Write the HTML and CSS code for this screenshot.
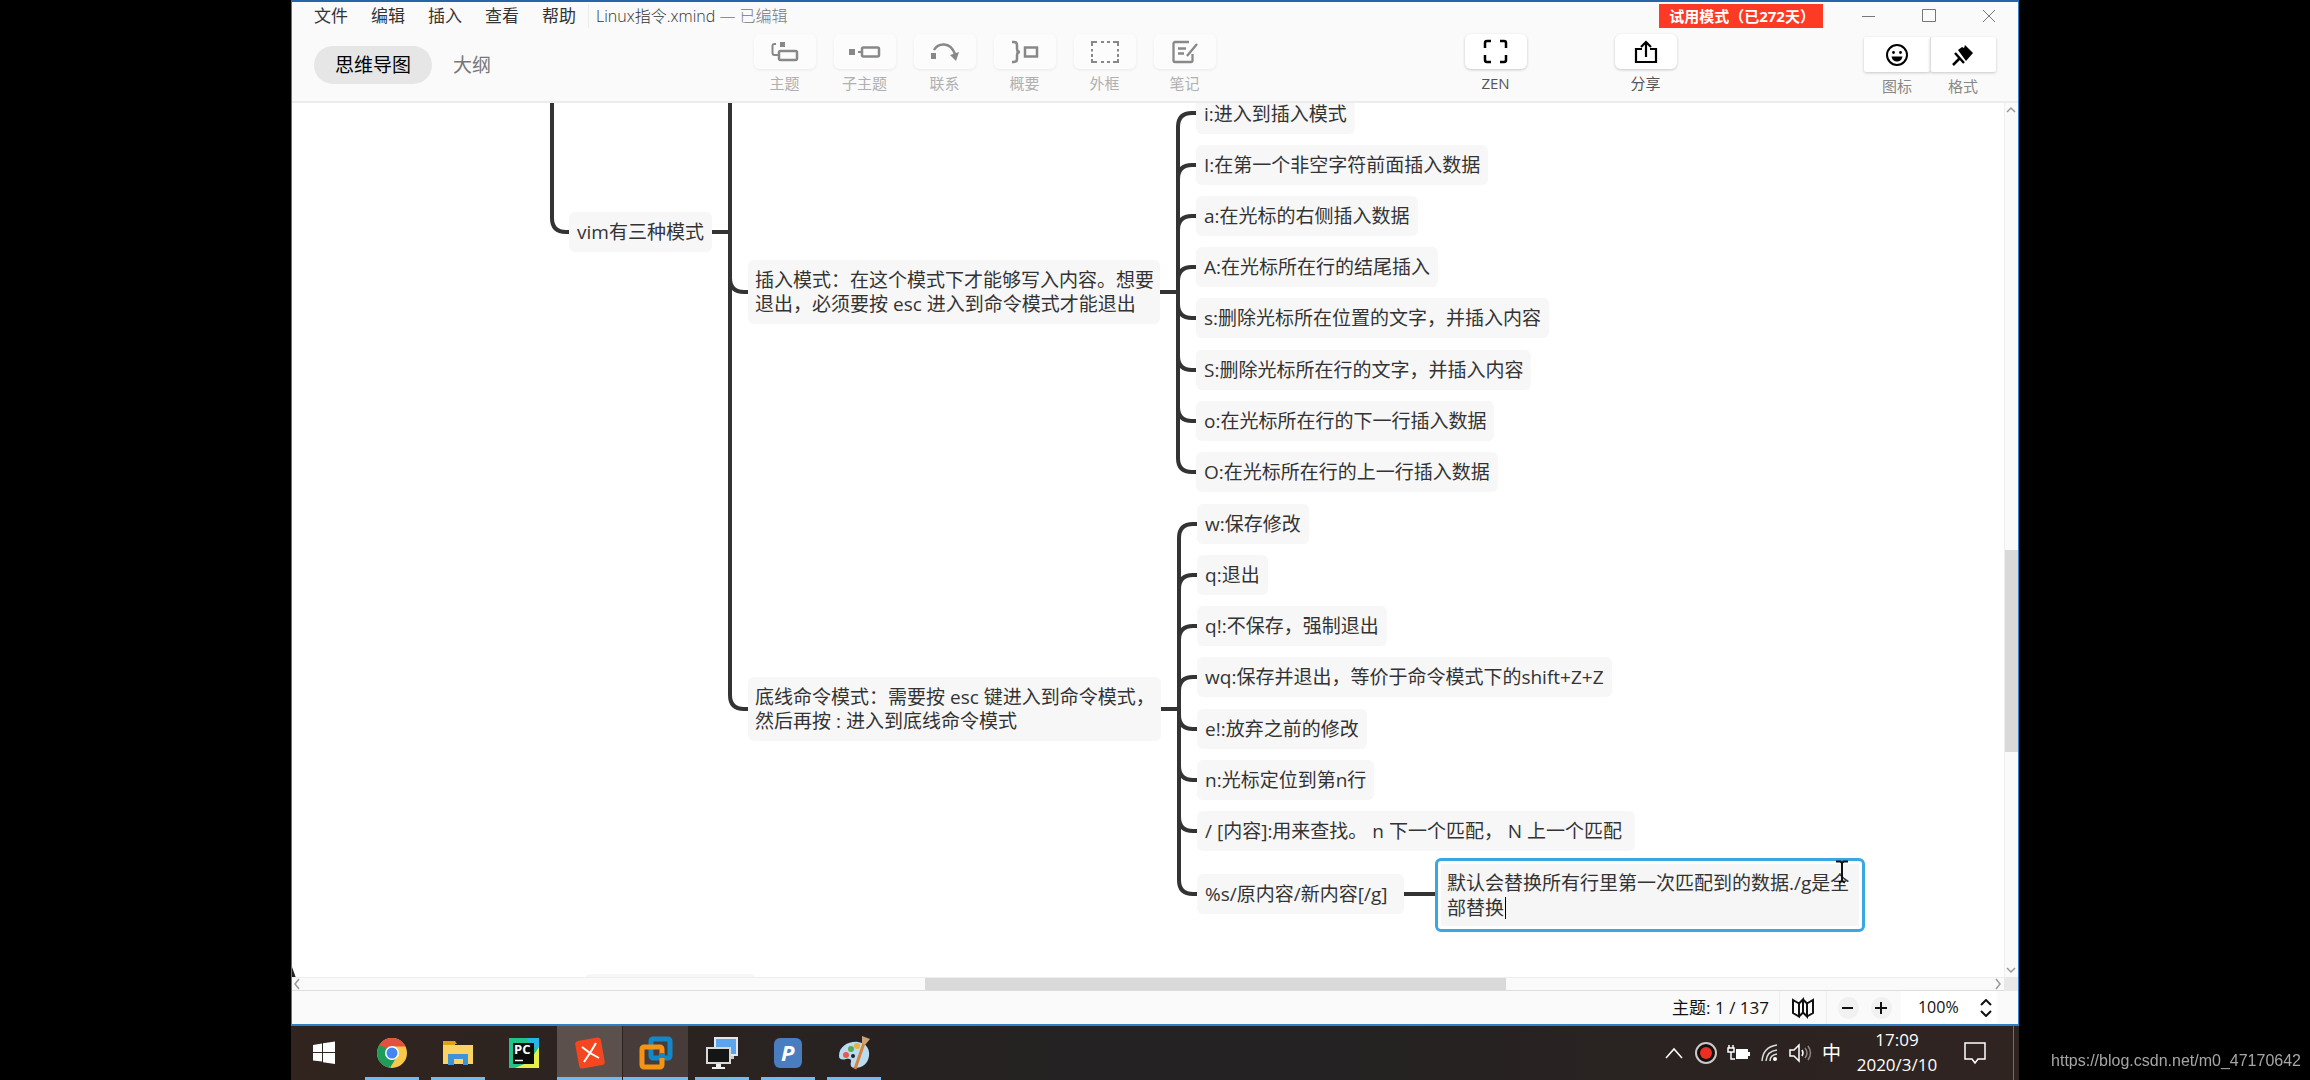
FILE: index.html
```html
<!DOCTYPE html>
<html lang="zh-CN">
<head>
<meta charset="utf-8">
<meta name="viewport" content="width=device-width, initial-scale=1">
<title>Linux指令.xmind</title>
<link rel="stylesheet" href="styles.css">
</head>
<body>
<div class="screen">
  <main class="app">
    <header class="header">
      <div class="titlebar">
        <nav class="menu" aria-label="菜单">
          <button type="button">文件</button>
          <button type="button">编辑</button>
          <button type="button">插入</button>
          <button type="button">查看</button>
          <button type="button">帮助</button>
        </nav>
        <h1 class="doc-title">Linux指令.xmind <span class="doc-state">— 已编辑</span></h1>
        <div class="trial">试用模式（已272天）</div>
        <div class="window-controls">
          <button type="button" aria-label="最小化"><svg width="14" height="14"><path d="M0 7.5h13"/></svg></button>
          <button type="button" aria-label="最大化"><svg width="14" height="14"><path d="M.5 .5h13v12h-13z"/></svg></button>
          <button type="button" aria-label="关闭"><svg width="14" height="14"><path d="M1 1l12 12M13 1L1 13"/></svg></button>
        </div>
      </div>
      <div class="toolbar">
        <div class="views">
          <button type="button" class="view view-active">思维导图</button>
          <button type="button" class="view">大纲</button>
        </div>
        <div class="tools tools-insert">
          <button type="button" class="tool"><span class="tool-face"><svg width="30" height="26" viewBox="0 0 30 26"><path d="M6 5H4.500a2 2 0 0 0-2 2v7a2 2 0 0 0 2 2H8" fill="none" stroke="currentColor" stroke-width="2"/><path d="M10 3h5v5h-5z" fill="currentColor"/><rect x="9" y="12" width="18" height="9" rx="1.500" fill="none" stroke="currentColor" stroke-width="2.500"/></svg></span>主题</button>
          <button type="button" class="tool"><span class="tool-face"><svg width="34" height="26" viewBox="0 0 34 26"><path d="M1 10h6v6H1z" fill="currentColor"/><path d="M10 13h4" stroke="currentColor" stroke-width="2"/><rect x="14" y="8.500" width="17" height="9" rx="1.500" fill="none" stroke="currentColor" stroke-width="2.500"/></svg></span>子主题</button>
          <button type="button" class="tool"><span class="tool-face"><svg width="30" height="26" viewBox="0 0 30 26"><path d="M1 14h5v6H1z" fill="currentColor"/><path d="M4 11C8 4 20 2 25 15" fill="none" stroke="currentColor" stroke-width="2.500"/><path d="M20 16l9-3-3 9z" fill="currentColor"/></svg></span>联系</button>
          <button type="button" class="tool"><span class="tool-face"><svg width="30" height="26" viewBox="0 0 30 26"><path d="M2 3h2q3 0 3 3v4q0 3 3 3-3 0-3 3v4q0 3-3 3H2M15 8.500h12v9H15z" fill="none" stroke="currentColor" stroke-width="2.500"/></svg></span>概要</button>
          <button type="button" class="tool"><span class="tool-face"><svg width="30" height="26" viewBox="0 0 30 26"><path d="M2 7V3h5M11 3h3M17 3h3M23 3h5v4M28 10v2.500M28 15v3M28 20v3h-5M20 23h-3M14 23h-3M7 23H2v-3M2 18v-3M2 12.500V10" fill="none" stroke="currentColor" stroke-width="2"/></svg></span>外框</button>
          <button type="button" class="tool"><span class="tool-face"><svg width="30" height="26" viewBox="0 0 30 26"><path d="M19 3H5a1.500 1.500 0 0 0-1.500 1.500v17A1.500 1.500 0 0 0 5 23h16a1.500 1.500 0 0 0 1.500-1.500V15M8 9.500h8M8 14.500h6M27 5L17 17" fill="none" stroke="currentColor" stroke-width="2.300"/></svg></span>笔记</button>
        </div>
        <div class="tools tools-share">
          <button type="button" class="tool"><span class="tool-face"><svg width="26" height="26" viewBox="0 0 26 26"><path d="M2 9V4q0-2 2-2h4M17 2h4q2 0 2 2v5M23 16v5q0 2-2 2h-4M8 23H4q-2 0-2-2v-5" fill="none" stroke="currentColor" stroke-width="2.500"/></svg></span>ZEN</button>
          <button type="button" class="tool"><span class="tool-face"><svg width="26" height="26" viewBox="0 0 26 26"><path d="M9 10H3v13h20V10h-6M13 18V3M8 8l5-5 5 5" fill="none" stroke="currentColor" stroke-width="2.200"/></svg></span>分享</button>
        </div>
        <div class="tools tools-panel">
          <button type="button" class="tool"><span class="tool-face"><svg width="26" height="26" viewBox="0 0 26 26"><circle cx="13" cy="13" r="10" fill="none" stroke="currentColor" stroke-width="2"/><circle cx="9.500" cy="10.500" r="1.400" fill="currentColor"/><circle cx="16.500" cy="10.500" r="1.400" fill="currentColor"/><path d="M7.500 14.500h11q-1 5-5.500 5t-5.500-5z" fill="currentColor"/></svg></span>图标</button>
          <button type="button" class="tool"><span class="tool-face"><svg width="26" height="26" viewBox="0 0 26 26"><path d="M8 8l4-3 2 1 1-3 8 8-7 8z" fill="currentColor"/><path d="M5 11l9 10M3 23l7-7" stroke="currentColor" stroke-width="2.500"/></svg></span>格式</button>
        </div>
      </div>
    </header>

    <section class="workspace">
      <div class="canvas">
        <svg class="links" aria-hidden="true">
          <path d="M260 0V115Q260 129 274 129H277"/>
          <path d="M420 129H438M438 0V592Q438 606 452 606H456"/>
          <path d="M438 175Q438 189 452 189H456"/>
          <path d="M868 189H886M904 10H900Q886 10 886 24V355Q886 369 900 369H904"/>
          <path d="M886 76Q886 62 900 62H904M886 127Q886 113 900 113H904M886 178Q886 164 900 164H904M886 201Q886 215 900 215H904M886 253Q886 267 900 267H904M886 304Q886 318 900 318H904"/>
          <path d="M869 606H887M905 421H901Q887 421 887 435V777Q887 791 901 791H905"/>
          <path d="M887 486Q887 472 901 472H905M887 537Q887 523 901 523H905M887 588Q887 574 901 574H905M887 612Q887 626 901 626H905M887 663Q887 677 901 677H905M887 714Q887 728 901 728H905"/>
          <path d="M1112 791H1148"/>
          <path class="corner" d="M0 864L4 875H0z"/>
        </svg>
        <div class="topic topic-vim">vim有三种模式</div>
        <div class="topic topic-insert">插入模式：在这个模式下才能够写入内容。想要<br>退出，必须要按 esc 进入到命令模式才能退出</div>
        <div class="topic topic-bottom">底线命令模式：需要按 esc 键进入到命令模式，<br>然后再按 : 进入到底线命令模式</div>

        <div class="topic insert-1">i:进入到插入模式</div>
        <div class="topic insert-2">I:在第一个非空字符前面插入数据</div>
        <div class="topic insert-3">a:在光标的右侧插入数据</div>
        <div class="topic insert-4">A:在光标所在行的结尾插入</div>
        <div class="topic insert-5">s:删除光标所在位置的文字，并插入内容</div>
        <div class="topic insert-6">S:删除光标所在行的文字，并插入内容</div>
        <div class="topic insert-7">o:在光标所在行的下一行插入数据</div>
        <div class="topic insert-8">O:在光标所在行的上一行插入数据</div>

        <div class="topic bottom-1">w:保存修改</div>
        <div class="topic bottom-2">q:退出</div>
        <div class="topic bottom-3">q!:不保存，强制退出</div>
        <div class="topic bottom-4">wq:保存并退出，等价于命令模式下的shift+Z+Z</div>
        <div class="topic bottom-5">e!:放弃之前的修改</div>
        <div class="topic bottom-6">n:光标定位到第n行</div>
        <div class="topic bottom-7">/ [内容]:用来查找。 n 下一个匹配， N 上一个匹配&nbsp;</div>
        <div class="topic bottom-8">%s/原内容/新内容[/g]</div>
        <div class="topic topic-below"></div>

        <div class="editor">
          <textarea class="editor-text" rows="2" aria-label="编辑主题">默认会替换所有行里第一次匹配到的数据./g是全
部替换</textarea>
          <span class="caret"></span>
        </div>
        <svg class="pointer" width="14" height="24" viewBox="0 0 14 24" aria-hidden="true"><path d="M1 1.500h4.500L7 3l1.500-1.500H13M7 3v18M4 22.500l3-1.500 3 1.500" fill="none" stroke="#111" stroke-width="2"/></svg>
      </div>
      <div class="vbar" aria-hidden="true">
        <svg width="10" height="8"><path d="M1 6l4-4 4 4"/></svg>
        <span class="vthumb"></span>
        <svg width="10" height="8"><path d="M1 2l4 4 4-4"/></svg>
      </div>
      <div class="hbar" aria-hidden="true">
        <svg width="8" height="12"><path d="M6 1L2 6l4 5"/></svg>
        <span class="hthumb"></span>
        <svg width="8" height="12"><path d="M2 1l4 5-4 5"/></svg>
      </div>
      <div class="bar-corner"></div>
    </section>

    <footer class="status">
      <span class="count">主题: 1 / 137</span>
      <button type="button" class="map" aria-label="导航图"><svg width="24" height="22" viewBox="0 0 24 22"><path d="M2 3l6 3.500v13L2 16zM8 6.500L12 2.500v13l-4 4M12 2.500l4 4v13l-4-4M16 6.500l6-3.500v13l-6 3.500" fill="none" stroke="currentColor" stroke-width="2"/></svg></button>
      <div class="zoom">
        <button type="button" aria-label="缩小"><svg width="12" height="12"><path d="M0 6h11" stroke="#111" stroke-width="2"/></svg></button>
        <button type="button" aria-label="放大"><svg width="12" height="12"><path d="M0 6h12M6 0v12" stroke="#111" stroke-width="2"/></svg></button>
      </div>
      <label class="scale">
        <select aria-label="缩放比例"><option>100%</option></select>
        <svg width="12" height="18"><path d="M1 6l5-5 5 5M1 12l5 5 5-5" fill="none" stroke="#111" stroke-width="2"/></svg>
      </label>
    </footer>
  </main>

  <div class="taskbar">
    <div class="apps">
      <button type="button" class="task task-start" aria-label="开始"><svg width="24" height="24" viewBox="0 0 24 24"><path d="M1 4l9-1.500V11H1zM11 2.300L23 .5V11H11zM1 12h9v8.500L1 19.500zM11 12h12v11l-12-1.800z" fill="#fff"/></svg></button>
      <button type="button" class="task task-open" aria-label="Chrome"><svg width="32" height="32" viewBox="0 0 32 32"><circle cx="16" cy="16" r="15" fill="#fbc94a"/><path d="M16 16L3 8.500a15 15 0 0 1 26.500 1H16z" fill="#e0513f"/><path d="M16 16l-2.500 14.800A15 15 0 0 1 3 8.500z" fill="#1f9d58"/><path d="M9.500 19l-6.500-11 8 3zM14 31l6-10-7 2z" fill="#1f9d58"/><circle cx="16" cy="16" r="7" fill="#fff"/><circle cx="16" cy="16" r="5.500" fill="#4385f4"/></svg></button>
      <button type="button" class="task task-open" aria-label="资源管理器"><svg width="32" height="28" viewBox="0 0 32 28"><path d="M1 2h12l2 3h-2v4H1z" fill="#e0a010"/><path d="M1 6h30v19H1z" fill="#fbd364"/><path d="M6 26V15h20v11h-5v-6h-9v6z" fill="#3e92d6"/></svg></button>
      <button type="button" class="task" aria-label="PyCharm"><svg width="30" height="30" viewBox="0 0 30 30"><path d="M0 0h30v30H0z" fill="#20c48a"/><path d="M17 0h13v14z" fill="#27b5e6"/><path d="M30 9v21H6l14-6z" fill="#e8ef4a"/><path d="M4 5h21v21H4z" fill="#0c0c0c"/><text x="5" y="16" class="pc">PC</text><path d="M6 22.500h8" stroke="#fff" stroke-width="1.500"/></svg></button>
      <button type="button" class="task task-open task-current" aria-label="XMind"><svg width="32" height="32" viewBox="0 0 32 32"><rect x="3" y="2" width="26" height="28" rx="3" transform="rotate(-10 16 16)" fill="#f5471f"/><path d="M8 10l8 6 6-10M10 25l6-9 9 5" fill="none" stroke="#fff" stroke-width="2"/></svg></button>
      <button type="button" class="task task-open task-group" aria-label="VMware"><svg width="34" height="34" viewBox="0 0 34 34"><rect x="12" y="3" width="19" height="19" rx="2" fill="none" stroke="#1487c9" stroke-width="5"/><rect x="3" y="11" width="20" height="20" rx="2" fill="none" stroke="#f59414" stroke-width="5"/><path d="M20 19.500h6" stroke="#1487c9" stroke-width="5"/></svg></button>
      <button type="button" class="task task-open" aria-label="远程桌面"><svg width="34" height="34" viewBox="0 0 34 34"><path d="M9 1h24v19H9z" fill="#e4e8ec"/><path d="M11 3h20v15H11z" fill="#5ba6ea"/><path d="M22 20h7v3h-7z" fill="#ccc"/><path d="M1 11h25v17H1z" fill="#d9d9d9"/><path d="M3 13h21v13H3z" fill="#151515"/><path d="M11 28h5v3h4v2H7v-2h4z" fill="#eee"/></svg></button>
      <button type="button" class="task task-open" aria-label="P"><svg width="30" height="30" viewBox="0 0 30 30"><rect x="1" y="0" width="28" height="30" rx="6" fill="#4a7cc0"/><text x="8" y="23" class="pp">P</text></svg></button>
      <button type="button" class="task task-open" aria-label="画图"><svg width="34" height="34" viewBox="0 0 34 34"><path d="M2 20C2 10 12 5 21 6c9 1 12 8 11 14-1 8-7 12-14 12-4 0-5-3-4-6s-2-4-5-3-7 1-7-3z" fill="#b9dcf0"/><circle cx="9" cy="19" r="3" fill="#e35b4e"/><circle cx="14" cy="13" r="3" fill="#5aa852"/><circle cx="20" cy="10" r="3" fill="#e9b23c"/><circle cx="16" cy="20" r="2" fill="#222"/><path d="M18 33L27 7" stroke="#d9823a" stroke-width="3"/><path d="M25 0l8 3-5 6-3-2z" fill="#cda27a"/></svg></button>
    </div>
    <div class="tray">
      <svg width="20" height="14"><path d="M1 12l8-9 8 9" fill="none" stroke="#fff" stroke-width="1.500"/></svg>
      <svg width="24" height="24"><circle cx="12" cy="12" r="10" fill="#111" stroke="#cfc8c5" stroke-width="2"/><circle cx="12" cy="12" r="6" fill="#ec2f22"/></svg>
      <svg width="24" height="18"><path d="M2 1v3M6 1v3M1 4h6v4H1zM4 8v7h4" fill="none" stroke="#fff" stroke-width="1.500"/><path d="M9 5h12v10H9z" fill="#fff"/><path d="M22 8v4" stroke="#fff" stroke-width="2"/></svg>
      <svg width="20" height="20"><path d="M2 18Q3 4 17 2M6 18Q7 8 17 7M10 18Q10 12 17 11" fill="none" stroke="#ddd" stroke-width="1.500"/><circle cx="15" cy="16" r="2" fill="#fff"/></svg>
      <svg width="24" height="20"><path d="M1 7h4l5-5v16l-5-5H1z" fill="none" stroke="#fff" stroke-width="1.500"/><path d="M13 7q2 3 0 6" fill="none" stroke="#fff" stroke-width="1.500"/><path d="M16 5q4 5 0 10M19 3q5 7 0 14" fill="none" stroke="#8d8482" stroke-width="1.500"/></svg>
      <span class="ime">中</span>
      <time class="clock" datetime="2020-03-10T17:09">17:09<br>2020/3/10</time>
      <svg width="24" height="24"><path d="M2 2h20v16h-7l-3 4-3-4H2z" fill="none" stroke="#fff" stroke-width="1.500"/></svg>
    </div>
  </div>
</div>
<a class="watermark" href="https://blog.csdn.net/m0_47170642">https://blog.csdn.net/m0_47170642</a>
</body>
</html>
```

FILE: styles.css
```css
* { box-sizing: border-box; }

body {
  margin: 0;
  background: #000;
  color: #333;
  font: 400 17px/24px "Open Sans", "Noto Sans CJK SC", sans-serif;
}

button, select, textarea {
  margin: 0;
  padding: 0;
  border: 0;
  background: none;
  color: inherit;
  font: inherit;
}

svg { display: block; flex: none; }

.screen {
  display: flex;
  flex-direction: column;
  min-height: 100vh;
  padding: 0 12.600%;
}

.app {
  flex: 1;
  display: flex;
  flex-direction: column;
  border: 1px solid #2f80c4;
  border-top: 2px solid #2566a8;
  border-bottom-width: 2px;
  background: #fafafa;
}

/* Header */
.header { border-bottom: 2px solid #ececec; }

.titlebar {
  display: flex;
  align-items: center;
  height: 28px;
  padding-left: 22px;
}

.menu {
  display: flex;
  gap: 23px;
  padding-right: 12px;
  border-right: 1px solid #ececec;
}

.doc-title {
  margin: 0 auto 0 7px;
  font-size: 16px;
  font-weight: 300;
  white-space: nowrap;
}

.doc-state { color: #777; }

.trial {
  padding: 0 8px 0 10px;
  background: #fd3a24;
  color: #fff;
  font-size: 15px;
  font-weight: 700;
  white-space: nowrap;
}

.window-controls {
  display: flex;
  gap: 46px;
  padding: 0 22px 0 39px;
}

.window-controls path { fill: none; stroke: #777; }

.toolbar {
  display: flex;
  align-items: flex-start;
  height: 71px;
  padding: 4px 22px 0 22px;
}

.views {
  display: flex;
  margin: 12px 54px 0 0;
  font-size: 19px;
}

.view {
  height: 38px;
  padding: 0 21px;
  border-radius: 19px;
  color: #777;
}

.view-active { background: #e6e6e6; color: #000; }

.tools { display: flex; }
.tools-insert { gap: 18px; margin-left: auto; color: #b0b0b0; }
.tools-share { gap: 88px; margin: 0 auto 0 249px; color: #555; }
.tools-panel { margin-top: 3px; color: #888; }

.tool {
  display: flex;
  flex-direction: column;
  align-items: center;
  gap: 3px;
  width: 62px;
  font-size: 15px;
  line-height: 22px;
}

.tool-face {
  display: grid;
  place-items: center;
  width: 100%;
  height: 35px;
  border-radius: 6px;
  background: #fff;
  box-shadow: 0 1px 3px #0003;
  color: #000;
}

.tools-insert .tool-face {
  background: #fcfcfc;
  box-shadow: 0 1px 3px #0001;
  color: #888;
}

.tools-panel .tool { width: 66px; }
.tools-panel .tool-face { border-radius: 2px; }
.tools-panel .tool + .tool .tool-face { border-left: 1px solid #ddd; }

/* Mind map canvas */
.workspace {
  flex: 1;
  display: grid;
  grid-template: 1fr 14px / 1fr 14px;
}

.canvas {
  position: relative;
  min-height: 840px;
  overflow: hidden;
  background: #fff;
}

.links { position: absolute; width: 100%; height: 100%; }
.links path { fill: none; stroke: #333; stroke-width: 4; }
.links .corner { fill: #222; stroke: none; }

.topic {
  position: absolute;
  padding: 8px;
  border-radius: 6px;
  background: #f7f7f7;
  font-size: 19px;
  line-height: 24px;
  white-space: nowrap;
}

.topic-vim { left: 277px; top: 109px; }
.topic-insert { left: 456px; top: 157px; width: 412px; padding-left: 7px; }
.topic-bottom { left: 456px; top: 574px; width: 413px; padding-left: 7px; }
.topic-below { left: 292px; top: 871px; width: 172px; height: 40px; }

.insert-1, .insert-2, .insert-3, .insert-4,
.insert-5, .insert-6, .insert-7, .insert-8 { left: 904px; }
.insert-1 { top: -9px; }
.insert-2 { top: 42px; }
.insert-3 { top: 93px; }
.insert-4 { top: 144px; }
.insert-5 { top: 195px; }
.insert-6 { top: 247px; }
.insert-7 { top: 298px; }
.insert-8 { top: 349px; }

.bottom-1, .bottom-2, .bottom-3, .bottom-4,
.bottom-5, .bottom-6, .bottom-7, .bottom-8 { left: 905px; }
.bottom-1 { top: 401px; }
.bottom-2 { top: 452px; }
.bottom-3 { top: 503px; }
.bottom-4 { top: 554px; }
.bottom-5 { top: 606px; }
.bottom-6 { top: 657px; }
.bottom-7 { top: 708px; }
.bottom-8 { top: 771px; width: 207px; }

.editor {
  position: absolute;
  left: 1143px;
  top: 755px;
  width: 430px;
  padding: 3px;
  border: 3px solid #3aa6e2;
  border-radius: 6px;
  background: #fff;
}

.editor-text {
  display: block;
  width: 100%;
  height: 62px;
  padding: 7px 0 0 6px;
  overflow: hidden;
  resize: none;
  outline: none;
  background: #f6f6f6;
  font-size: 19px;
  line-height: 25px;
  white-space: pre;
}

.caret {
  position: absolute;
  left: 67px;
  top: 36px;
  width: 1px;
  height: 22px;
  background: #000;
}

.pointer { position: absolute; left: 1543px; top: 757px; }

/* Scroll bars */
.vbar, .hbar {
  display: flex;
  align-items: center;
  background: #fafafa;
}

.vbar { flex-direction: column; border-left: 1px solid #eee; padding: 3px 0; }
.hbar { border-top: 1px solid #eee; border-bottom: 1px solid #ddd; padding: 0 2px 0 1px; }
.vbar path, .hbar path { fill: none; stroke: #999; stroke-width: 1.500; }

.vthumb {
  width: 100%;
  height: 202px;
  margin: auto 0;
  background: #d9d9d9;
  flex: none;
}
.vbar svg:first-child { margin-bottom: 222px; }

.hthumb {
  width: 34%;
  height: 100%;
  margin: 0 auto;
  background: #d9d9d9;
}
.hbar svg:first-child { margin-right: 136px; }

.bar-corner { background: #e8e8e8; }

/* Status bar */
.status {
  display: flex;
  justify-content: flex-end;
  height: 33px;
  padding-right: 21px;
  color: #111;
  line-height: 33px;
}

.count { padding-right: 10px; }
.map { padding: 0 11px; border: solid #eee; border-width: 0 1px; }

.zoom {
  display: flex;
  align-items: center;
  gap: 12px;
  padding: 0 9px 0 11px;
}

.zoom button {
  display: grid;
  place-items: center;
  width: 21px;
  height: 22px;
  border-radius: 50%;
  background: #f1f1f1;
}

.scale {
  display: flex;
  align-items: center;
  gap: 17px;
  padding: 0 5px 0 17px;
  background: #fff;
}

.scale select { width: 45px; appearance: none; font-size: 16px; }

/* Taskbar */
.taskbar {
  display: flex;
  justify-content: space-between;
  height: 54px;
  background: linear-gradient(90deg, #31241f, #242222 45%, #242222 60%, #302421);
  color: #fff;
}

.apps { display: flex; }

.task {
  display: flex;
  align-items: center;
  justify-content: center;
  width: 66px;
  height: 54px;
  border: solid transparent;
  border-width: 0 6px;
}

.task-start { width: 65px; margin-right: 3px; }
.task-open { background: linear-gradient(#76b9ed, #76b9ed) bottom / 100% 3px no-repeat padding-box; }
.task-current, .task-group { border-width: 0 1px 0 0; }
.task-current { background-color: #5b504c; }
.task-group { background-color: #473c39; }

.pc { fill: #fff; font: 700 13px "Open Sans", sans-serif; }
.pp { fill: #fff; font: italic 700 22px "Open Sans", sans-serif; }

.tray {
  display: flex;
  align-items: center;
  gap: 9px;
  margin-right: 5px;
  padding-right: 26px;
  border-right: 1px solid #766d6a;
}

.ime { font-size: 19px; }

.clock {
  width: 94px;
  padding-bottom: 2px;
  margin-right: 10px;
  font-size: 17px;
  line-height: 25px;
  text-align: center;
}

.watermark {
  position: fixed;
  right: 9px;
  bottom: 7px;
  color: #a6a6a6;
  font: 16px/24px "Liberation Sans", sans-serif;
  text-decoration: none;
}
```
